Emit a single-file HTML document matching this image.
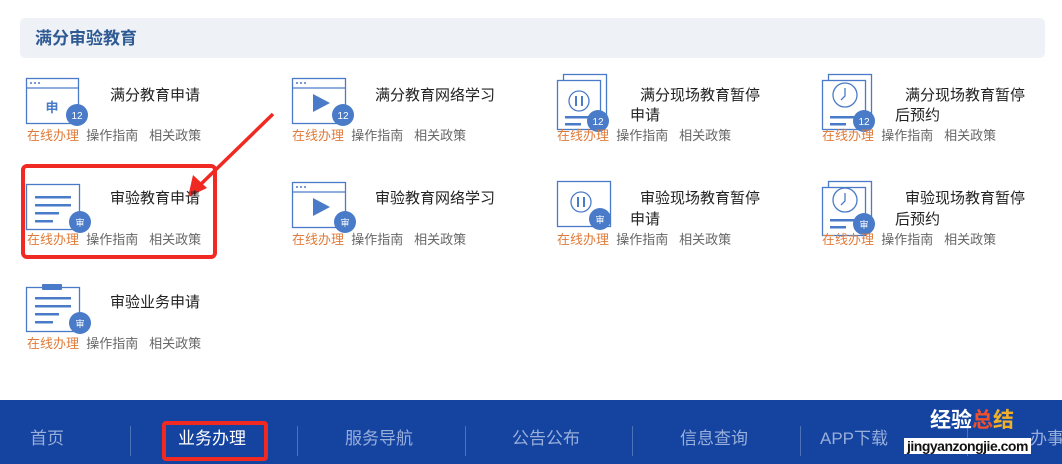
<!DOCTYPE html>
<html><head><meta charset="utf-8"><style>
*{margin:0;padding:0;box-sizing:border-box}
body{width:1062px;height:464px;overflow:hidden;background:#fff;position:relative;font-family:"Liberation Sans","Noto Sans CJK SC",sans-serif}
.a{position:absolute;white-space:nowrap;line-height:1}
.t{font-size:15px;color:#222}
.l{font-size:13px;color:#666}
.o{color:#e07b39}
.hdr{position:absolute;left:20px;top:18px;width:1025px;height:40px;background:#eef2f7;border-radius:5px}
.nav{position:absolute;left:0;top:400px;width:1062px;height:64px;background:#1444a0;overflow:hidden}
.n{position:absolute;top:30px;font-size:17px;color:#98aedb;line-height:1;white-space:nowrap}
.sep{position:absolute;top:26px;width:1px;height:30px;background:#4e72b8}
</style></head><body>
<div class="hdr"></div>
<div class="a" style="left:35px;top:30px;font-size:17px;font-weight:bold;color:#2f5a94">满分审验教育</div>

<svg class="a" style="left:0;top:0" width="1062" height="400" viewBox="0 0 1062 400">
<g fill="none" stroke="#4a7bc8" stroke-width="1.3">
<rect x="26.5" y="78.5" width="52" height="45" fill="#fff"/><line x1="26" y1="88" x2="79" y2="88"/>
<rect x="292.5" y="78.5" width="53" height="45" fill="#fff"/><line x1="292" y1="88" x2="346" y2="88"/>
<rect x="563.5" y="74.5" width="43" height="46" fill="#fff"/><rect x="557.5" y="80.5" width="43" height="49" fill="#fff"/>
<circle cx="579" cy="101" r="10"/>
<rect x="828.5" y="74.5" width="43" height="46" fill="#fff"/><rect x="822.5" y="80.5" width="43" height="49" fill="#fff"/>
<circle cx="845" cy="95" r="12"/><path d="M845 88v8l-4 4"/>
<rect x="26.5" y="184.5" width="53" height="45" fill="#fff"/>
<rect x="292.5" y="182.5" width="53" height="45" fill="#fff"/><line x1="292" y1="192" x2="346" y2="192"/>
<rect x="557.5" y="181.5" width="53" height="45" fill="#fff"/><circle cx="581" cy="202" r="10"/>
<rect x="828.5" y="181.5" width="43" height="46" fill="#fff"/><rect x="822.5" y="187.5" width="43" height="48" fill="#fff"/>
<circle cx="845" cy="200" r="12"/><path d="M845 193v8l-4 4"/>
<rect x="26.5" y="287.5" width="53" height="44" fill="#fff"/>
</g>
<g fill="#4a7bc8">
<circle cx="31" cy="83" r="1"/><circle cx="35" cy="83" r="1"/><circle cx="39" cy="83" r="1"/>
<circle cx="297" cy="83" r="1"/><circle cx="301" cy="83" r="1"/><circle cx="305" cy="83" r="1"/>
<circle cx="297" cy="187" r="1"/><circle cx="301" cy="187" r="1"/><circle cx="305" cy="187" r="1"/>
<path d="M313 94L330 103L313 112Z"/><path d="M313 198L330 207L313 216Z"/>
<rect x="575" y="96" width="2" height="10"/><rect x="581" y="96" width="2" height="10"/>
<rect x="577" y="197" width="2" height="10"/><rect x="583" y="197" width="2" height="10"/>
<rect x="565" y="116" width="24" height="2.5"/><rect x="565" y="123" width="16" height="2.5"/>
<rect x="830" y="116" width="24" height="2.5"/><rect x="830" y="123" width="16" height="2.5"/>
<rect x="830" y="219" width="24" height="2.5"/><rect x="830" y="226" width="16" height="2.5"/>
<rect x="35" y="196" width="36" height="2.5"/><rect x="35" y="204" width="36" height="2.5"/><rect x="35" y="212" width="24" height="2.5"/><rect x="35" y="220" width="18" height="2.5"/>
<rect x="42" y="284" width="20" height="6" rx="1"/>
<rect x="35" y="297" width="36" height="2.5"/><rect x="35" y="305" width="36" height="2.5"/><rect x="35" y="313" width="24" height="2.5"/><rect x="35" y="321" width="18" height="2.5"/>
<circle cx="77" cy="115" r="11"/><circle cx="343" cy="115" r="11"/><circle cx="598" cy="121" r="11"/><circle cx="864" cy="121" r="11"/>
<circle cx="80" cy="222" r="11"/><circle cx="345" cy="222" r="11"/><circle cx="600" cy="219" r="11"/><circle cx="864" cy="224" r="11"/>
<circle cx="80" cy="323" r="11"/>
</g>
<g fill="#fff" font-size="10" font-family="Liberation Sans,Noto Sans CJK SC,sans-serif" text-anchor="middle">
<text x="77" y="119">12</text><text x="343" y="119">12</text><text x="598" y="125">12</text><text x="864" y="125">12</text>
<text x="80" y="226" font-size="9">审</text><text x="345" y="226" font-size="9">审</text><text x="600" y="223" font-size="9">审</text><text x="864" y="228" font-size="9">审</text><text x="80" y="327" font-size="9">审</text>
</g>
<text x="52" y="112" fill="#4a7bc8" font-size="13" font-weight="bold" text-anchor="middle" font-family="Noto Sans CJK SC,sans-serif">申</text>
<rect x="23" y="166" width="192" height="91" rx="4" fill="none" stroke="#f02a22" stroke-width="4"/>
<line x1="273" y1="114" x2="200" y2="185" stroke="#f02a22" stroke-width="3.5"/>
<path d="M188 197L193 175L207 188Z" fill="#f02a22"/>
</svg>

<div class="a t" style="left:110px;top:88px">满分教育申请</div>
<div class="a t" style="left:375px;top:88px">满分教育网络学习</div>
<div class="a t" style="left:640px;top:88px">满分现场教育暂停</div>
<div class="a t" style="left:630px;top:108px">申请</div>
<div class="a t" style="left:905px;top:88px">满分现场教育暂停</div>
<div class="a t" style="left:895px;top:108px">后预约</div>
<div class="a t" style="left:110px;top:191px">审验教育申请</div>
<div class="a t" style="left:375px;top:191px">审验教育网络学习</div>
<div class="a t" style="left:640px;top:191px">审验现场教育暂停</div>
<div class="a t" style="left:630px;top:212px">申请</div>
<div class="a t" style="left:905px;top:191px">审验现场教育暂停</div>
<div class="a t" style="left:895px;top:212px">后预约</div>
<div class="a t" style="left:110px;top:295px">审验业务申请</div>

<div class="a l" style="left:27px;top:129px"><span class="o">在线办理</span>&nbsp; 操作指南&nbsp;&nbsp; 相关政策</div>
<div class="a l" style="left:292px;top:129px"><span class="o">在线办理</span>&nbsp; 操作指南&nbsp;&nbsp; 相关政策</div>
<div class="a l" style="left:557px;top:129px"><span class="o">在线办理</span>&nbsp; 操作指南&nbsp;&nbsp; 相关政策</div>
<div class="a l" style="left:822px;top:129px"><span class="o">在线办理</span>&nbsp; 操作指南&nbsp;&nbsp; 相关政策</div>
<div class="a l" style="left:27px;top:233px"><span class="o">在线办理</span>&nbsp; 操作指南&nbsp;&nbsp; 相关政策</div>
<div class="a l" style="left:292px;top:233px"><span class="o">在线办理</span>&nbsp; 操作指南&nbsp;&nbsp; 相关政策</div>
<div class="a l" style="left:557px;top:233px"><span class="o">在线办理</span>&nbsp; 操作指南&nbsp;&nbsp; 相关政策</div>
<div class="a l" style="left:822px;top:233px"><span class="o">在线办理</span>&nbsp; 操作指南&nbsp;&nbsp; 相关政策</div>
<div class="a l" style="left:27px;top:337px"><span class="o">在线办理</span>&nbsp; 操作指南&nbsp;&nbsp; 相关政策</div>

<div class="nav">
<div class="n" style="left:30px">首页</div>
<div class="sep" style="left:130px"></div>
<div class="n" style="left:178px;color:#fff">业务办理</div>
<div style="position:absolute;left:162px;top:21px;width:106px;height:40px;border:4px solid #f02a22;border-radius:4px"></div>
<div class="sep" style="left:297px"></div>
<div class="n" style="left:345px">服务导航</div>
<div class="sep" style="left:465px"></div>
<div class="n" style="left:512px">公告公布</div>
<div class="sep" style="left:632px"></div>
<div class="n" style="left:680px">信息查询</div>
<div class="sep" style="left:800px"></div>
<div class="n" style="left:820px">APP下载</div>
<div class="sep" style="left:967px"></div>
<div class="n" style="left:1030px">办事指南</div>
<div class="a" style="left:930px;top:10px;font-size:21px;font-weight:bold;color:#fff">经验<span style="color:#f0502a">总</span><span style="color:#f0b02a">结</span></div>
<div class="a" style="left:904px;top:38px;font-size:14px;color:#111;font-weight:bold;letter-spacing:-0.5px;background:#fff;padding:1px 3px">jingyanzongjie.com</div>
</div>
</body></html>
